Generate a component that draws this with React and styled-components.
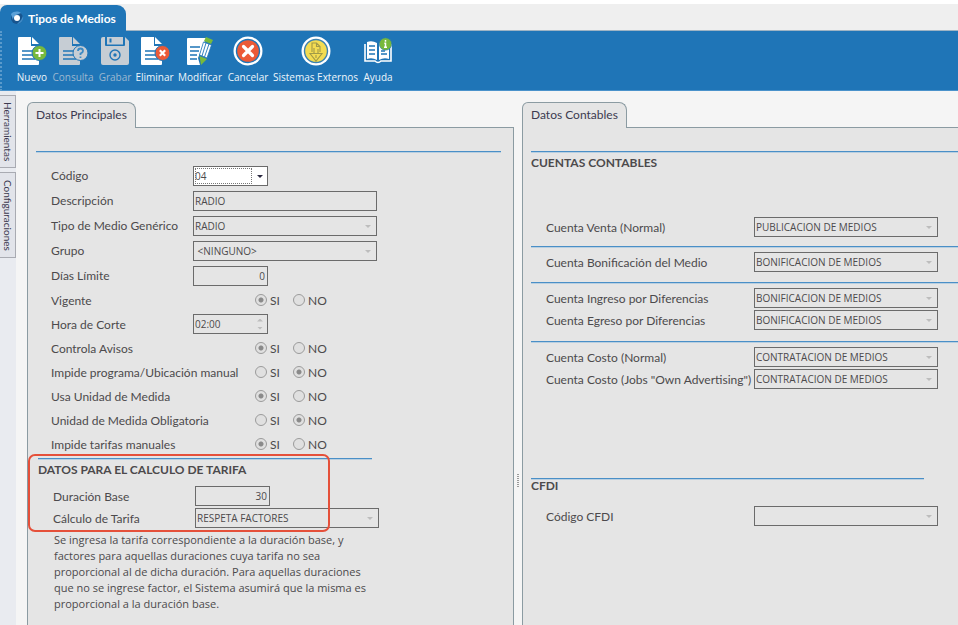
import React from 'react'
import styled, { createGlobalStyle } from 'styled-components'


const GlobalStyle = createGlobalStyle`
  *, *::before, *::after {
    box-sizing: border-box;
  }
  body {
    margin: 0;
    background: #f5f5f5;
    color: #4c4a4c;
    font-family: Lato, 'Open Sans', sans-serif;
    font-size: 12px;
  }
  button, input, select {
    font-family: inherit;
    color: inherit;
  }
`

const Page = styled.div`
  display: flex;
  flex-direction: column;
  height: 100vh;
  overflow: hidden;
`

const TitleBar = styled.header`
  display: flex;
  align-items: flex-end;
  height: 31px;
  border-top: 4px solid #fff;
  border-bottom: 1px solid #9fb4c4;
  background: #efefef;
`

const TitleTab = styled.h1`
  display: flex;
  align-items: center;
  gap: 4px;
  height: 26px;
  margin: 0 0 -1px;
  padding: 0 10px;
  border-radius: 7px 9px 0 0;
  background: #1f75b7;
  color: #fff;
  font-size: 12px;
  font-weight: 700;
`

const Toolbar = styled.nav`
  display: flex;
  align-items: flex-start;
  flex: none;
  height: 60px;
  padding: 5px 0 0 13px;
  border-left: 2px dotted #5a9acb;
  border-bottom: 1px solid #4a92cb;
  background: #1f75b7;
`

const ToolButton = styled.button`
  display: flex;
  flex-direction: column;
  align-items: center;
  gap: 4px;
  width: ${props => props.$width}px;
  padding: 0;
  border: none;
  background: none;
  color: ${props => (props.disabled ? '#9db8d0' : '#eef5fb')};
  font-family: 'Open Sans', sans-serif;
  font-size: 10px;
  line-height: 14px;
  white-space: nowrap;
`

const Workspace = styled.div`
  display: flex;
  flex: 1;
  min-height: 0;
`

const SideStrip = styled.aside`
  display: flex;
  flex-direction: column;
  gap: 4px;
  width: 16px;
  padding-top: 4px;
  background: #e9ebf0;
`

const SideTab = styled.button`
  display: flex;
  align-items: center;
  justify-content: center;
  width: 16px;
  height: ${props => props.$height}px;
  padding: 0;
  border: 1px solid #a9abb2;
  border-left: none;
  background: #e2e4ea;
  color: #3c3a50;
  font-size: 10px;
  line-height: 14px;
  writing-mode: vertical-rl;
`

const Panels = styled.main`
  display: grid;
  grid-template-columns: 487fr 8px 436fr;
  flex: 1;
  padding: 11px 0 0 11px;
`

const Panel = styled.section`
  display: flex;
  flex-direction: column;
  min-width: 0;
`

const PanelTab = styled.h2`
  align-self: flex-start;
  z-index: 1;
  height: 26px;
  margin: 0 0 -1px;
  padding: 0 8px;
  border: 1px solid #8b9ba2;
  border-bottom: none;
  border-radius: 6px 8px 0 0;
  background: #e5e5e5;
  color: #3c3a50;
  font-size: 12px;
  font-weight: 400;
  line-height: 24px;
`

const PanelBody = styled.div`
  flex: 1;
  padding: 23px ${props => (props.$open ? '0' : '12px')} 0 8px;
  border: 1px solid #8b9ba2;
  border-width: 1px ${props => (props.$open ? '0' : '1px')} 0 1px;
  background: #e5e5e5;
`

const Splitter = styled.div`
  display: flex;
  justify-content: center;
  padding-top: 372px;

  span {
    width: 2px;
    height: 13px;
    background: repeating-linear-gradient(#9a9a9a 0 1px, transparent 1px 2px);
  }
`

const Rule = styled.hr`
  width: ${props => props.$width || '100%'};
  height: 1px;
  margin: 0;
  border: none;
  background: #4a8fc7;
  box-shadow: 0 1px #b9cfe0;
`

const Heading = styled.h3`
  margin: 0;
  font-size: 12px;
  font-weight: 700;
  line-height: ${props => props.$line || 22}px;
`

const Fields = styled.div`
  padding: ${props => props.$pad || '0'};
`

const Row = styled.div`
  display: grid;
  grid-template-columns: ${props => props.$label || 142}px 1fr;
  align-items: center;
  height: ${props => props.$height}px;
  white-space: nowrap;
`

const Box = styled.div`
  position: relative;
  display: flex;
  width: ${props => (props.$wide ? 184 : 75)}px;
  height: 20px;
  border: 1px solid #6b6b6b;
  background: ${props => (props.$active ? '#fff' : '#e5e5e5')};

  input, select {
    flex: 1;
    min-width: 0;
    width: 100%;
    margin: 0;
    padding: 0 2px 0 1px;
    border: none;
    appearance: none;
    background: none;
    opacity: 1;
    color: #4c4a4c;
    font-family: 'Open Sans', sans-serif;
    font-size: 10px;
    text-align: ${props => (props.$right ? 'right' : 'left')};
  }
`

const Arrow = styled.span`
  position: absolute;
  top: 8px;
  right: ${props => (props.$active ? 4 : 5)}px;
  border: 3px solid transparent;
  border-top: 3px solid ${props => (props.$active ? '#2a2840' : '#bdbdbd')};
  border-bottom: none;
  pointer-events: none;
`

const FocusFrame = styled.span`
  position: absolute;
  inset: 1px 15px 1px 1px;
  border: 1px dotted #777;
  pointer-events: none;
`

const Spinner = styled.div`
  display: flex;
  flex-direction: column;
  justify-content: center;
  gap: 5px;
  padding-right: 4px;

  button {
    width: 6px;
    height: 3px;
    padding: 0;
    border: none;
    background: #bdbdbd;
    clip-path: polygon(0 100%, 50% 0, 100% 100%);
  }
  button:last-child {
    clip-path: polygon(0 0, 100% 0, 50% 100%);
  }
`

const Choices = styled.div`
  display: flex;
  padding-left: 62px;

  label {
    display: flex;
    align-items: center;
    gap: 3px;
    width: 38px;
    font-size: 12px;
  }
  input {
    flex: none;
    width: 12px;
    height: 12px;
    margin: 0;
    border: 1px solid #9b9b9b;
    border-radius: 50%;
    appearance: none;
    background: #e0e0e0;
  }
  input:checked {
    background: radial-gradient(#8a8a8a 0 2px, #e0e0e0 3px);
  }
`

const Highlighted = styled.div`
  position: relative;

  &::after {
    content: '';
    position: absolute;
    inset: -4px auto -3px -10px;
    width: 302px;
    border: 2px solid #e5503a;
    border-radius: 7px;
    pointer-events: none;
  }
`

const Note = styled.p`
  width: 320px;
  margin: 3px 0 0 16px;
  font-family: 'Open Sans', sans-serif;
  font-size: 11px;
  line-height: 16px;
  white-space: pre-line;
`

const TabLogo = () => (
  <svg width="14" height="14" viewBox="0 0 14 14">
    <circle cx="7" cy="7" r="6" fill="#17558f" />
    <path d="M1 3 C4 0 8 0 11 2 L6 4 C4 5 3 7 3 9 Z" fill="#5ba1d8" />
    <path d="M13 5 C14 9 11 13 7 13 L11 9 Z" fill="#3f8bc8" />
    <circle cx="7" cy="7" r="3" fill="#fff" />
  </svg>
)

const Sheet = ({ fill = '#fff' }) => (
  <>
    <path d="M1 2 Q1 1 2 1 H14 V10 H22 V28 Q22 29 21 29 H2 Q1 29 1 28 Z" fill={fill} />
    <path d="M15 1 L22 8 H15 Z" fill={fill} />
    <path d="M5 15 H16 M5 19 H16 M5 23 H18" stroke="#1f75b7" strokeWidth="1.4" />
  </>
)

const icons = {
  nuevo: (
    <>
      <Sheet />
      <circle cx="22.5" cy="17" r="7.5" fill="#78b93c" stroke="#1f75b7" />
      <path d="M22.5 13 V21 M18.5 17 H26.5" stroke="#fff" strokeWidth="2" />
    </>
  ),
  consulta: (
    <>
      <Sheet fill="#c6cdd4" />
      <circle cx="22.5" cy="17" r="7.5" fill="#c6cdd4" stroke="#1f75b7" />
      <path d="M20 15 Q20 12.5 22.5 12.5 T25 15 Q25 16.5 22.5 17.5 V19 M22.5 20.5 V22" fill="none" stroke="#3c8ac4" strokeWidth="1.8" />
    </>
  ),
  grabar: (
    <>
      <path d="M1 3 Q1 1 3 1 H5 V9 Q5 10 6 10 H24 Q25 10 25 9 V1 L29 5 V27 Q29 29 27 29 H3 Q1 29 1 27 Z" fill="#c6cdd4" />
      <path d="M7 1 H23 V8.5 H7 Z" fill="#c6cdd4" />
      <path d="M10.5 2.5 V6.5" stroke="#1f75b7" strokeWidth="2" />
      <circle cx="15" cy="19" r="5" fill="none" stroke="#1f75b7" strokeWidth="1.4" />
      <circle cx="15" cy="19" r="1.7" fill="#1f75b7" />
    </>
  ),
  eliminar: (
    <>
      <Sheet />
      <circle cx="22.5" cy="17" r="7.5" fill="#ec5a37" stroke="#1f75b7" />
      <path d="M19.8 14.3 L25.2 19.7 M25.2 14.3 L19.8 19.7" stroke="#fff" strokeWidth="2.2" />
    </>
  ),
  modificar: (
    <>
      <path d="M2 3 Q2 2 3 2 H21 L13 22 L15 29 H3 Q2 29 2 28 Z" fill="#fff" />
      <path d="M5 11 H15 M5 15 H14 M5 19 H12 M5 23 H12" stroke="#1f75b7" strokeWidth="1.4" />
      <path d="M21 1 L28 4 L26 8 L19 5 Z" fill="#78b93c" />
      <path d="M18.5 6 L26.5 9 L22 22 L14.5 19 Z" fill="#fff" stroke="#1f75b7" strokeWidth="0.8" />
      <path d="M21 7 L17 20 M24 8 L19.5 21" stroke="#1f75b7" strokeWidth="0.9" />
      <path d="M14.5 20 L22 23 L16 29 Z" fill="#78b93c" />
    </>
  ),
  cancelar: (
    <>
      <circle cx="15" cy="15" r="14.5" fill="#fff" />
      <circle cx="15" cy="15" r="11.5" fill="#ec5a37" stroke="#1f75b7" strokeWidth="1.4" />
      <path d="M10.5 10.5 L19.5 19.5 M19.5 10.5 L10.5 19.5" stroke="#fff" strokeWidth="3.2" strokeLinecap="round" />
    </>
  ),
  sistemas: (
    <>
      <circle cx="15" cy="15" r="14.5" fill="#fff" />
      <circle cx="15" cy="15" r="11.5" fill="#f3dc52" stroke="#3c82b0" strokeWidth="1.4" />
      <path d="M11 16 V7 H15.5 L19 10.5 V16 M15.5 7 V10.5 H19 M9 17.5 H21 L15 25 Z M13 12 V18 M17 13 V18 M15 19 V22" fill="none" stroke="#a09a48" strokeWidth="1.1" />
    </>
  ),
  ayuda: (
    <>
      <path d="M4 6 Q9 4 14 7 V24 Q9 21 4 23 Z M16 7 Q20 5 26 6 V23 Q21 21 16 24 Z" fill="#fff" />
      <path d="M2 8 V25 H12 Q15 28 18 25 H28 V8" fill="none" stroke="#fff" strokeWidth="1.6" />
      <path d="M6 10 H12 M6 14 H12 M6 18 H12 M18 15 H22 M18 18 H24" stroke="#1f75b7" strokeWidth="1.4" />
      <circle cx="22.5" cy="8" r="6.2" fill="#78b93c" stroke="#1f75b7" strokeWidth="0.6" />
      <path d="M22.5 4 V5.8 M21.3 7.3 H22.5 V11.3 M21 11.3 H24" fill="none" stroke="#fff" strokeWidth="1.5" />
    </>
  ),
}

const tools = [
  { icon: 'nuevo', text: 'Nuevo', width: 34 },
  { icon: 'consulta', text: 'Consulta', width: 48, disabled: true },
  { icon: 'grabar', text: 'Grabar', width: 36, disabled: true },
  { icon: 'eliminar', text: 'Eliminar', width: 43 },
  { icon: 'modificar', text: 'Modificar', width: 48 },
  { icon: 'cancelar', text: 'Cancelar', width: 48 },
  { icon: 'sistemas', text: 'Sistemas Externos', width: 87 },
  { icon: 'ayuda', text: 'Ayuda', width: 38 },
]

const Combo = ({ id, value, wide = true, active }) => (
  <Box $wide={wide} $active={active}>
    <select id={id} disabled={!active}>
      <option>{value}</option>
    </select>
    {active && <FocusFrame />}
    <Arrow $active={active} />
  </Box>
)

const ComboRow = ({ id, text, value, height = 25, label, ...rest }) => (
  <Row $height={height} $label={label}>
    <label htmlFor={id}>{text}</label>
    <Combo id={id} value={value} {...rest} />
  </Row>
)

const InputRow = ({ id, text, value, height = 25, wide, right }) => (
  <Row $height={height}>
    <label htmlFor={id}>{text}</label>
    <Box $wide={wide} $right={right}>
      <input id={id} type="text" defaultValue={value} disabled />
    </Box>
  </Row>
)

const RadioRow = ({ id, text, yes }) => (
  <Row $height={24} role="radiogroup" aria-labelledby={id}>
    <span id={id}>{text}</span>
    <Choices>
      <label><input type="radio" name={id} defaultChecked={yes} disabled />SI</label>
      <label><input type="radio" name={id} defaultChecked={!yes} disabled />NO</label>
    </Choices>
  </Row>
)

const MainData = () => (
  <Panel>
    <PanelTab>Datos Principales</PanelTab>
    <PanelBody>
      <Rule />
      <Fields $pad="11px 0 2px 15px">
        <ComboRow id="codigo" text="Código" value="04" wide={false} active />
        <InputRow id="descripcion" text="Descripción" value="RADIO" wide />
        <ComboRow id="generico" text="Tipo de Medio Genérico" value="RADIO" />
        <ComboRow id="grupo" text="Grupo" value={'\u00a0<NINGUNO>'} />
        <InputRow id="dias" text="Días Límite" value="0" right />
        <RadioRow id="vigente" text="Vigente" yes />
        <Row $height={24}>
          <label htmlFor="hora">Hora de Corte</label>
          <Box>
            <input id="hora" type="text" defaultValue="02:00" disabled />
            <Spinner>
              <button type="button" aria-label="Aumentar" disabled />
              <button type="button" aria-label="Disminuir" disabled />
            </Spinner>
          </Box>
        </Row>
        <RadioRow id="avisos" text="Controla Avisos" yes />
        <RadioRow id="programa" text="Impide programa/Ubicación manual" />
        <RadioRow id="unidad" text="Usa Unidad de Medida" yes />
        <RadioRow id="obligatoria" text="Unidad de Medida Obligatoria" />
        <RadioRow id="tarifas" text="Impide tarifas manuales" yes />
      </Fields>
      <Fields $pad="0 0 0 2px">
        <Highlighted>
          <Rule $width="334px" />
          <Heading>DATOS PARA EL CALCULO DE TARIFA</Heading>
          <Fields $pad="4px 0 0 15px">
            <InputRow id="duracion" text="Duración Base" value="30" height={22} right />
            <ComboRow id="calculo" text="Cálculo de Tarifa" value="RESPETA FACTORES" height={22} />
          </Fields>
        </Highlighted>
        <Note>
          {`Se ingresa la tarifa correspondiente a la duración base, y
          factores para aquellas duraciones cuya tarifa no sea
          proporcional al de dicha duración. Para aquellas duraciones
          que no se ingrese factor, el Sistema asumirá que la misma es
          proporcional a la duración base.`}
        </Note>
      </Fields>
    </PanelBody>
  </Panel>
)

const AccountData = () => (
  <Panel>
    <PanelTab>Datos Contables</PanelTab>
    <PanelBody $open>
      <Rule />
      <Heading>CUENTAS CONTABLES</Heading>
      <Fields $pad="42px 0 8px 15px">
        <ComboRow id="venta" text="Cuenta Venta (Normal)" value="PUBLICACION DE MEDIOS" height={22} label={208} />
      </Fields>
      <Rule />
      <Fields $pad="4px 0 9px 15px">
        <ComboRow id="bonificacion" text="Cuenta Bonificación del Medio" value="BONIFICACION DE MEDIOS" height={22} label={208} />
      </Fields>
      <Rule />
      <Fields $pad="4px 0 10px 15px">
        <ComboRow id="ingreso" text="Cuenta Ingreso por Diferencias" value="BONIFICACION DE MEDIOS" height={22} label={208} />
        <ComboRow id="egreso" text="Cuenta Egreso por Diferencias" value="BONIFICACION DE MEDIOS" height={22} label={208} />
      </Fields>
      <Rule />
      <Fields $pad="4px 0 88px 15px">
        <ComboRow id="costo" text="Cuenta Costo (Normal)" value="CONTRATACION DE MEDIOS" height={22} label={208} />
        <ComboRow id="jobs" text={'Cuenta Costo (Jobs "Own Advertising")'} value="CONTRATACION DE MEDIOS" height={22} label={208} />
      </Fields>
      <Rule $width="92%" />
      <Heading $line={14}>CFDI</Heading>
      <Fields $pad="12px 0 0 15px">
        <ComboRow id="cfdi" text="Código CFDI" value="" height={22} label={208} />
      </Fields>
    </PanelBody>
  </Panel>
)

export default function App() {
  return (
    <Page>
      <GlobalStyle />
      <TitleBar>
        <TitleTab><TabLogo />Tipos de Medios</TitleTab>
      </TitleBar>
      <Toolbar>
        {tools.map(tool => (
          <ToolButton key={tool.icon} type="button" $width={tool.width} disabled={tool.disabled}>
            <svg width="30" height="30" viewBox="0 0 30 30">{icons[tool.icon]}</svg>
            {tool.text}
          </ToolButton>
        ))}
      </Toolbar>
      <Workspace>
        <SideStrip>
          <SideTab type="button" $height={73}>Herramientas</SideTab>
          <SideTab type="button" $height={86}>Configuraciones</SideTab>
        </SideStrip>
        <Panels>
          <MainData />
          <Splitter><span /></Splitter>
          <AccountData />
        </Panels>
      </Workspace>
    </Page>
  )
}
